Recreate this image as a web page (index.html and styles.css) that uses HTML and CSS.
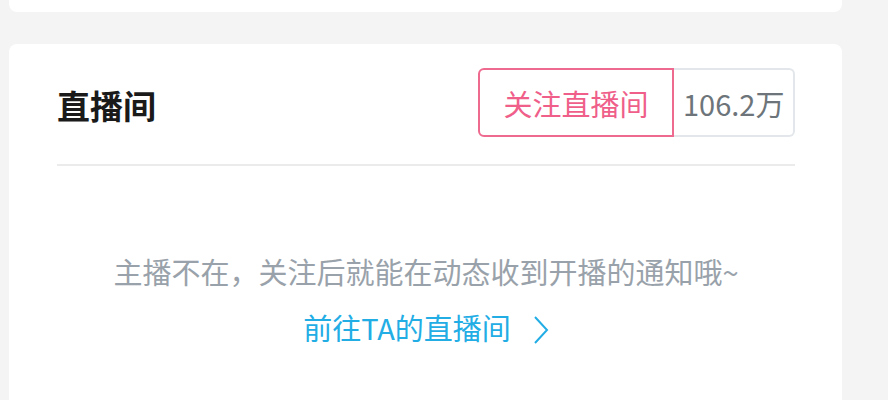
FILE: index.html
```html
<!DOCTYPE html>
<html lang="zh-CN">
<head>
    <meta charset="UTF-8">
    <title>直播间</title>
    <link rel="stylesheet" href="styles.css">
</head>
<body>
    <div class="column">
        <div class="card card-top"></div>

        <div class="card live-card">
            <div class="live-head">
                <h2 class="live-title">直播间</h2>
                <div class="follow-group">
                    <span class="follow-btn">关注直播间</span>
                    <span class="follow-count">106.2万</span>
                </div>
            </div>

            <div class="live-empty">
                <p class="empty-tip">主播不在，关注后就能在动态收到开播的通知哦~</p>
                <a class="goto-room" href="#">
                    前往TA的直播间
                    <svg class="chevron" width="16" height="30" viewBox="0 0 16 30">
                        <path d="M2 2 L14 15 L2 28" fill="none" stroke="#23ade5" stroke-width="2"/>
                    </svg>
                </a>
            </div>
        </div>
    </div>
</body>
</html>
```

FILE: styles.css
```css
body {
    margin: 0;
    padding: 0;
    background-color: #f4f4f5;
    font-family: "Noto Sans CJK SC", "Noto Sans", sans-serif;
    overflow: hidden;
}

.column {
    width: 833px;
    margin-left: 9px;
}

.card {
    background: #fff;
    border-radius: 8px;
}

.card-top {
    height: 12px;
    border-radius: 0 0 8px 8px;
}

.live-card {
    margin-top: 32px;
    padding: 24px 47px 0 48px;
    height: 356px;
    box-sizing: border-box;
    border-radius: 8px 8px 0 0;
}

.live-head {
    display: flex;
    align-items: center;
    justify-content: space-between;
    padding-bottom: 27px;
    border-bottom: 2px solid #ebebeb;
}

.live-title {
    margin: 0;
    font-size: 33px;
    font-weight: bold;
    color: #1a1a1a;
    line-height: 40px;
    padding-top: 4px;
}

.follow-group {
    display: flex;
    height: 69px;
}

.follow-btn {
    display: flex;
    align-items: center;
    justify-content: center;
    width: 196px;
    box-sizing: border-box;
    border: 2px solid #ef6a8f;
    border-radius: 6px 0 0 6px;
    color: #ef5f8a;
    font-size: 29px;
}

.follow-count {
    display: flex;
    align-items: center;
    width: 121px;
    box-sizing: border-box;
    padding-left: 9px;
    border: 2px solid #e3e6ea;
    border-left: none;
    border-radius: 0 6px 6px 0;
    color: #6d757a;
    font-size: 29px;
}

.live-empty {
    text-align: center;
    padding-top: 77px;
}

.empty-tip {
    margin: 0;
    font-size: 29px;
    line-height: 56px;
    color: #99a2aa;
}

.goto-room {
    display: inline-flex;
    align-items: center;
    font-size: 29px;
    line-height: 56px;
    color: #23ade5;
    text-decoration: none;
}

.chevron {
    margin-left: 22px;
    margin-top: 6px;
}
```
